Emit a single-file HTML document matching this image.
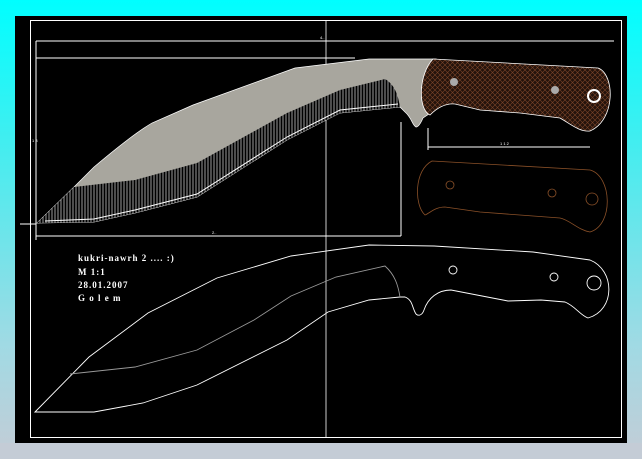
<!DOCTYPE html>
<html><head><style>
html,body{margin:0;padding:0;width:642px;height:459px;overflow:hidden;background:linear-gradient(#00ffff 0%,#40eef0 30%,#a0dae4 75%,#c4ccd6 100%);}
svg{position:absolute;left:0;top:0}
</style></head><body>
<svg width="642" height="459" viewBox="0 0 642 459">
<defs>
<pattern id="h" width="3" height="10" patternUnits="userSpaceOnUse"><rect width="3" height="10" fill="#000"/><line x1="1" y1="0" x2="1" y2="10" stroke="#ddd" stroke-width="0.7"/></pattern>
<pattern id="x" width="5" height="5" patternUnits="userSpaceOnUse"><rect width="5" height="5" fill="#24130c"/><path d="M0 0L5 5M5 0L0 5" stroke="#7a4428" stroke-width="0.6"/></pattern>
</defs>
<rect x="0" y="443" width="642" height="16" fill="#c4ccd6"/>
<rect x="15" y="16" width="612" height="427" fill="#000"/>
<rect x="30.5" y="20.5" width="591" height="417" fill="none" stroke="#fff" stroke-width="1"/>
<line x1="326" y1="20" x2="326" y2="438" stroke="#fff" stroke-width="0.8"/>
<g stroke="#fff" stroke-width="1" fill="none">
<line x1="36" y1="41" x2="614" y2="41"/><line x1="36" y1="58" x2="355" y2="58"/>
<line x1="36" y1="41" x2="36" y2="240"/>
<line x1="36" y1="236" x2="401" y2="236"/><line x1="401" y1="122" x2="401" y2="236"/>
<line x1="428" y1="147" x2="590" y2="147"/><line x1="428" y1="128" x2="428" y2="150"/>
<line x1="20" y1="224" x2="36" y2="224"/>
</g>
<g fill="#fff" font-family="Liberation Sans,sans-serif" font-size="4"><text x="320" y="39">4..</text><text x="212" y="234">2..</text><text x="500" y="145">1 1 2</text><text x="32" y="142">1 8</text></g>
<path d="M37 223 L74 187 L94 167 C120 145 140 130 152 123 L193 105 L295 68 L369 59 L436 59 C425 75 420 100 432 112 L423 118 C420 125 418 127 416 127 C412 125 412 118 405 112 L400 107 L340 113 L287 140 L197 197 L135 213 L94 222 Z" fill="#a8a69e" stroke="#fff" stroke-width="0.7"/>
<path d="M74 187 L135 180 L197 163 L287 113 L340 90 L385 79 C395 85 398 95 400 107 L340 113 L287 140 L197 197 L135 213 L94 222 L37 223 Z" fill="url(#h)"/>
<path d="M45 221 L94 219 L135 210 L197 194 L287 137 L340 110 L398 104" stroke="#fff" stroke-width="1" fill="none"/>
<path d="M433 59 L598 68 C615 74 616 120 590 131 C580 132 572 125 560 118 L520 113 L480 110 L455 104 C445 103 437 108 430 115 C418 110 418 75 433 59 Z" fill="url(#x)" stroke="#fff" stroke-width="0.8"/>
<circle cx="454" cy="82" r="4" fill="#aaa"/><circle cx="555" cy="90" r="4" fill="#aaa"/><circle cx="594" cy="96" r="6" fill="none" stroke="#fff" stroke-width="2"/>
<g stroke="#8a5028" stroke-width="0.8" fill="none">
<path d="M432 161 L590 170 C612 176 614 225 590 232 C578 230 570 220 560 218 L480 212 L445 207 C435 207 430 213 425 215 C414 205 414 170 432 161 Z"/>
<circle cx="450" cy="185" r="4"/><circle cx="552" cy="193" r="4"/><circle cx="592" cy="199" r="6"/>
</g>
<g fill="none" stroke="#fff" stroke-width="0.9">
<path d="M35 412 L89 357 L148 313 L217 278 L291 256 L369 245 L434 246 L533 252 L590 260 C615 270 616 310 588 318 C580 315 575 306 565 302 L541 300 L508 301 L451 290 C438 290 428 298 424 310 C422 316 418 316 416 314 C412 308 413 300 405 297 L400 297 L369 300 L328 312 L287 340 L197 385 L143 403 L94 412 Z"/>
<circle cx="453" cy="270" r="4"/><circle cx="554" cy="277" r="4"/><circle cx="594" cy="283" r="7"/>
</g>
<path d="M70 374 L135 367 L197 350 L254 320 L291 296 L336 277 L385 266 C395 275 398 285 400 297" fill="none" stroke="#999" stroke-width="0.9"/>
<g fill="#fff" font-family="Liberation Serif,serif" font-size="9" font-weight="bold" letter-spacing="1">
<text x="78" y="261">kukri-nawrh 2 .... :)</text>
<text x="78" y="275">M  1:1</text>
<text x="78" y="288">28.01.2007</text>
<text x="78" y="301">G o l e m</text>
</g>
</svg>
</body></html>
